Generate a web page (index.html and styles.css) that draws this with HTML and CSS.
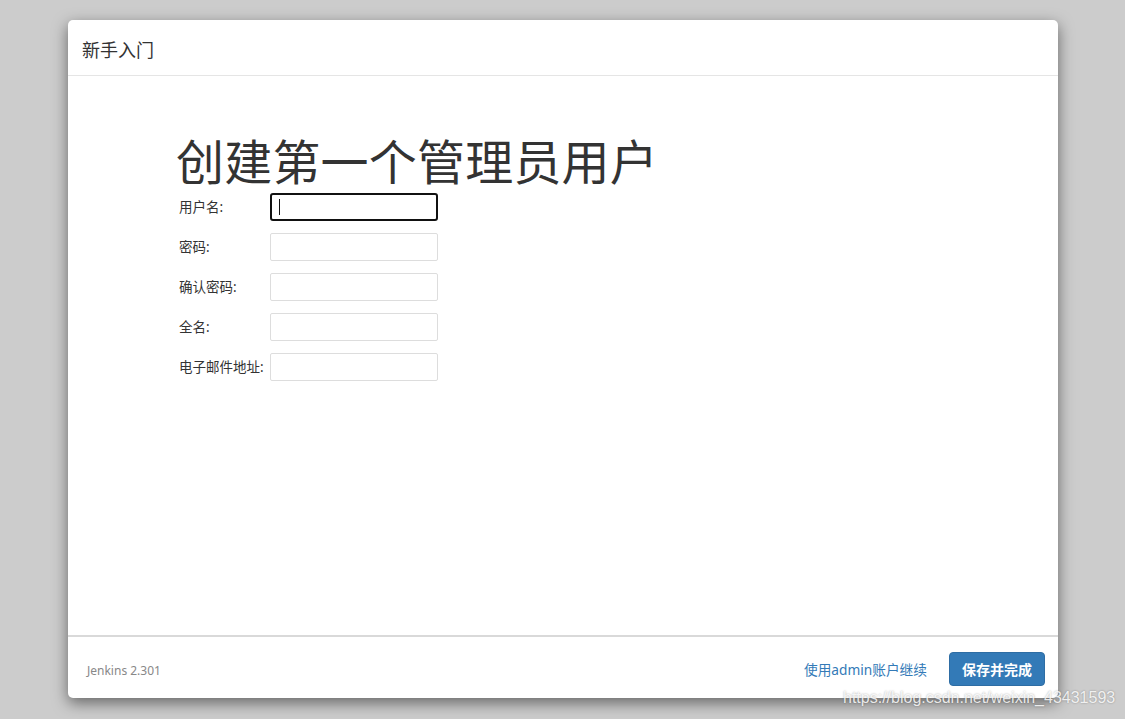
FILE: index.html
```html
<!DOCTYPE html>
<html lang="zh-CN">
<head>
<meta charset="utf-8">
<title>新手入门</title>
<link rel="stylesheet" href="styles.css">
</head>
<body>
<div class="modal">
  <div class="modal-header">新手入门</div>
  <div class="modal-body">
    <h1 class="title">创建第一个管理员用户</h1>
    <div class="form">
      <label class="label">用户名:</label>
      <div class="field"><div class="input focused"><span class="caret"></span></div></div>
      <label class="label">密码:</label>
      <div class="field"><div class="input"></div></div>
      <label class="label">确认密码:</label>
      <div class="field"><div class="input"></div></div>
      <label class="label">全名:</label>
      <div class="field"><div class="input"></div></div>
      <label class="label">电子邮件地址:</label>
      <div class="field"><div class="input"></div></div>
    </div>
  </div>
  <div class="modal-footer">
    <span class="version">Jenkins 2.301</span>
    <div class="actions">
      <a class="link">使用admin账户继续</a>
      <button class="btn">保存并完成</button>
    </div>
  </div>
</div>
<div class="watermark">https://blog.csdn.net/weixin_43431593</div>
</body>
</html>
```
FILE: styles.css
```css
html, body {
  margin: 0;
  padding: 0;
  height: 100%;
}
body {
  background: #cccccc;
  font-family: "Noto Sans", "Noto Sans CJK SC", sans-serif;
  color: #333333;
  padding: 20px 67px 0 68px;
  box-sizing: border-box;
  position: relative;
  overflow: hidden;
}
.modal {
  width: 990px;
  height: 678px;
  background: #ffffff;
  border-radius: 5px;
  box-shadow: 0 5px 15px rgba(0, 0, 0, 0.5);
  display: flex;
  flex-direction: column;
}
.modal-header {
  height: 56px;
  box-sizing: border-box;
  border-bottom: 1px solid #e5e5e5;
  padding: 0 14px;
  font-size: 18px;
  display: flex;
  align-items: center;
  padding-top: 2px;
}
.modal-body {
  flex: 1;
  padding: 58px 0 0 108px;
}
.title {
  margin: 0;
  font-weight: 400;
  font-size: 48px;
  line-height: 56px;
  color: #333333;
  letter-spacing: 0.2px;
}
.form {
  display: grid;
  grid-template-columns: 94px 168px;
  row-gap: 12px;
  margin-top: 3px;
}
.label {
  font-size: 13.5px;
  padding-left: 3px;
  padding-bottom: 2px;
  display: flex;
  align-items: center;
  white-space: nowrap;
}
.input {
  height: 28px;
  box-sizing: border-box;
  border: 1px solid #dddddd;
  border-radius: 2px;
  background: #fff;
  position: relative;
}
.input.focused {
  border: 2px solid #111111;
  border-radius: 3px;
}
.caret {
  position: absolute;
  left: 7px;
  top: 4px;
  width: 1px;
  height: 16px;
  background: #111;
}
.modal-footer {
  height: 63px;
  box-sizing: border-box;
  border-top: 2px solid #d9d9d9;
  display: flex;
  align-items: center;
  justify-content: space-between;
  padding: 2px 13px 0 19px;
}
.version {
  font-size: 12px;
  color: #888888;
  padding-top: 3px;
}
.actions {
  display: flex;
  align-items: center;
  gap: 22px;
}
.link {
  color: #337ab7;
  font-size: 13.7px;
  padding-top: 1px;
}
.btn {
  background: #337ab7;
  border: 1px solid #2e6da4;
  color: #ffffff;
  font-family: inherit;
  font-size: 14px;
  font-weight: 700;
  height: 34px;
  width: 96px;
  border-radius: 4px;
  padding: 0;
}
.watermark {
  position: absolute;
  left: 843px;
  top: 689px;
  font-family: "Liberation Sans", Arial, sans-serif;
  font-size: 16px;
  color: rgba(255, 255, 255, 0.85);
  text-shadow: 0 0 2px rgba(0, 0, 0, 0.35);
  white-space: nowrap;
}
```
